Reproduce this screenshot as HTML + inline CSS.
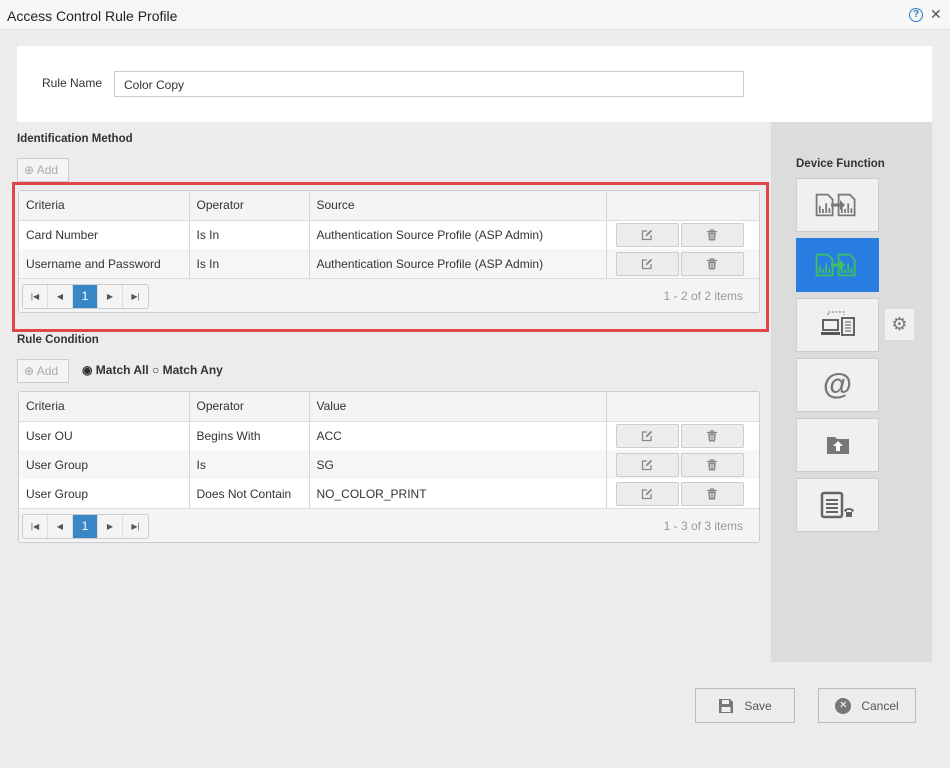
<!DOCTYPE html><html><head><style>
*{box-sizing:border-box;margin:0;padding:0}
body{width:950px;height:768px;background:#ececec;font-family:"Liberation Sans",sans-serif;font-size:12px;color:#333;position:relative;overflow:hidden}
.a{position:absolute}
.tbl{position:absolute;left:18px;width:742px;border:1px solid #ccc;background:#fff;border-radius:3px}
.tbl table{border-collapse:collapse;width:100%}
.tbl td{height:29px;padding:0 7px;border-right:1px solid #d5d5d5;font-size:12px}
.tbl td:last-child{border-right:0}
.tbl tr.h td{background:#f4f4f4;border-bottom:1px solid #ddd}
.tbl tr.g td{background:#f6f6f6}
.ib{display:inline-block;width:63px;height:24px;border:1px solid #ccc;background:#ececec;border-radius:2px;vertical-align:middle;margin-right:2px;text-align:center;padding-top:5px}
.pg{height:34px;background:#f4f4f4;border-top:1px solid #ddd;position:relative}
.pager{position:absolute;left:3px;top:5px;display:flex;border:1px solid #ccc;border-radius:3px;height:25px;background:#f4f4f4}
.pager span{width:25px;text-align:center;line-height:23px;font-size:8px;color:#555;border-right:1px solid #ddd}
.pager span:last-child{border-right:0}
.pager .on{background:#3a87c8;color:#fff;font-size:12px}
.cnt{position:absolute;right:16px;top:10px;color:#999;font-size:12px}
.add{position:absolute;left:17px;width:52px;height:24px;border:1px solid #ccc;background:#f4f4f4;color:#aaa;font-size:12px;line-height:22px;padding-left:6px}
.df{position:absolute;left:796px;width:83px;height:54px;background:#f0f0f0;border:1px solid #ccc;display:flex;align-items:center;justify-content:center}
.btn{position:absolute;top:688px;height:35px;border:1px solid #bbb;background:#ececec;font-size:12px;color:#555;display:flex;align-items:center;justify-content:center;gap:10px}
</style></head><body>
<svg width="0" height="0" style="position:absolute"><defs>
<symbol id="ed" viewBox="0 0 12 12"><path d="M10 6v4.5H1.5V2H6" fill="none" stroke="#888" stroke-width="1.3"/><path d="M4.5 7.5l1-2.5L10 0.8l1.2 1.2L6.8 6.5z" fill="#888"/></symbol>
<symbol id="tr" viewBox="0 0 12 12"><path d="M1 2.5h10M4.5 2.5V1h3v1.5" stroke="#888" stroke-width="1.2" fill="none"/><path d="M2.2 3.5h7.6l-.7 8H2.9z" fill="#888"/><path d="M4.5 5v5M6 5v5M7.5 5v5" stroke="#ececec" stroke-width=".7"/></symbol>
<symbol id="doc" viewBox="0 0 30 30"><path d="M2 2h14l6 6v20H2z" fill="none" stroke="currentColor" stroke-width="2.2"/><path d="M6 25V16M10 25V20M14 25V13M18 25V19" stroke="currentColor" stroke-width="2.2"/></symbol>
</defs></svg>
<div class="a" style="left:0;top:0;width:950px;height:30px;background:#f7f7f7;border-bottom:1px solid #e0e0e0"></div>
<div class="a" style="left:7px;top:8px;font-size:14px;color:#222">Access Control Rule Profile</div>
<div class="a" style="left:909px;top:8px;width:14px;height:14px;border:1.5px solid #2a7ac0;border-radius:50%;color:#2a7ac0;font-size:10px;font-weight:bold;text-align:center;line-height:11px">?</div>
<div class="a" style="left:930px;top:6px;font-size:14px;color:#555">✕</div>
<div class="a" style="left:17px;top:46px;width:915px;height:76px;background:#fff"></div>
<div class="a" style="left:42px;top:76px">Rule Name</div>
<div class="a" style="left:114px;top:71px;width:630px;height:26px;border:1px solid #ccc;background:#fff;padding:6px 9px">Color Copy</div>
<div class="a" style="left:771px;top:122px;width:161px;height:540px;background:#dcdcdc"></div>
<div class="a" style="left:17px;top:133px;font-weight:bold;font-size:11.5px">Identification Method</div>
<div class="add" style="top:158px">⊕ Add</div>
<div class="tbl" style="top:190px">
<table><tr class="h"><td style="width:170px">Criteria</td><td style="width:120px">Operator</td><td style="width:297px">Source</td><td></td></tr>
<tr><td>Card Number</td><td>Is In</td><td>Authentication Source Profile (ASP Admin)</td><td style="padding-left:9px"><span class="ib"><svg width="12" height="12"><use href="#ed"/></svg></span><span class="ib"><svg width="12" height="12"><use href="#tr"/></svg></span></td></tr>
<tr class="g"><td>Username and Password</td><td>Is In</td><td>Authentication Source Profile (ASP Admin)</td><td style="padding-left:9px"><span class="ib"><svg width="12" height="12"><use href="#ed"/></svg></span><span class="ib"><svg width="12" height="12"><use href="#tr"/></svg></span></td></tr></table>
<div class="pg"><div class="pager"><span>|◀</span><span>◀</span><span class="on">1</span><span>▶</span><span>▶|</span></div><div class="cnt">1 - 2 of 2 items</div></div>
</div>
<div class="a" style="left:12px;top:182px;width:757px;height:150px;border:3px solid #e0454a"></div>
<div class="a" style="left:17px;top:334px;font-weight:bold;font-size:11.5px">Rule Condition</div>
<div class="add" style="top:359px">⊕ Add</div>
<div class="a" style="left:82px;top:363px;font-weight:bold">◉ Match All ○ Match Any</div>
<div class="tbl" style="top:391px">
<table><tr class="h"><td style="width:170px">Criteria</td><td style="width:120px">Operator</td><td style="width:297px">Value</td><td></td></tr>
<tr><td>User OU</td><td>Begins With</td><td>ACC</td><td style="padding-left:9px"><span class="ib"><svg width="12" height="12"><use href="#ed"/></svg></span><span class="ib"><svg width="12" height="12"><use href="#tr"/></svg></span></td></tr>
<tr class="g"><td>User Group</td><td>Is</td><td>SG</td><td style="padding-left:9px"><span class="ib"><svg width="12" height="12"><use href="#ed"/></svg></span><span class="ib"><svg width="12" height="12"><use href="#tr"/></svg></span></td></tr>
<tr><td>User Group</td><td>Does Not Contain</td><td>NO_COLOR_PRINT</td><td style="padding-left:9px"><span class="ib"><svg width="12" height="12"><use href="#ed"/></svg></span><span class="ib"><svg width="12" height="12"><use href="#tr"/></svg></span></td></tr></table>
<div class="pg"><div class="pager"><span>|◀</span><span>◀</span><span class="on">1</span><span>▶</span><span>▶|</span></div><div class="cnt">1 - 3 of 3 items</div></div>
</div>
<div class="a" style="left:796px;top:158px;font-weight:bold;font-size:11.5px">Device Function</div>
<div class="df" style="top:178px;color:#777"><svg width="46" height="30" viewBox="0 0 46 30"><g color="#777"><use href="#doc" width="24" height="30"/><use href="#doc" x="22" width="24" height="30"/></g><path d="M16 15h10" stroke="#777" stroke-width="3"/><path d="M25 10l5 5-5 5z" fill="#777"/></svg></div>
<div class="df" style="top:238px;background:#2a7de0;border-color:#2a7de0"><svg width="46" height="30" viewBox="0 0 46 30"><g color="#3cc060"><use href="#doc" width="24" height="30"/><use href="#doc" x="22" width="24" height="30"/></g><path d="M16 15h10" stroke="#3cc060" stroke-width="3"/><path d="M25 10l5 5-5 5z" fill="#3cc060"/></svg></div>
<div class="df" style="top:298px"><svg width="34" height="28" viewBox="0 0 34 28"><path d="M7 4V1h16v3" fill="none" stroke="#777" stroke-dasharray="2 1.5"/><rect x="2" y="9" width="15" height="10" fill="none" stroke="#555" stroke-width="1.8"/><rect x="0" y="21" width="19" height="3" fill="#555"/><rect x="21" y="7" width="12" height="17" fill="none" stroke="#555" stroke-width="1.8"/><path d="M24 11h6M24 14h6M24 17h6M24 20h6" stroke="#555"/></svg></div>
<div class="df" style="top:358px;color:#777;font-size:30px;font-weight:bold">@</div>
<div class="df" style="top:418px"><svg width="24" height="20" viewBox="0 0 24 20"><path d="M1 2h8l2 2h12v15H1z" fill="#777"/><path d="M12 6l-5 5h3v5h4v-5h3z" fill="#fff"/></svg></div>
<div class="df" style="top:478px"><svg width="36" height="28" viewBox="0 0 36 28"><rect x="2" y="2" width="20" height="24" rx="2" fill="none" stroke="#666" stroke-width="2.5"/><path d="M6 9h12M6 13h12M6 17h12M6 21h12" stroke="#666" stroke-width="2"/><path d="M24 19q5-4 10 0l-1 2-2-1v-1h-4v1l-2 1z" fill="#666"/><rect x="26" y="21" width="6" height="5" fill="#666"/></svg></div>
<div class="a" style="left:885px;top:309px;width:29px;height:31px;background:#f0f0f0;color:#777;font-size:18px;text-align:center;line-height:30px">⚙</div>
<div class="btn" style="left:695px;width:100px"><svg width="16" height="16" viewBox="0 0 16 16"><path d="M1 1h11l3 3v11H1z" fill="#777"/><rect x="4" y="2" width="7" height="4" fill="#eee"/><rect x="3.5" y="9" width="9" height="5" fill="#eee"/></svg>Save</div>
<div class="btn" style="left:818px;width:98px"><span style="display:inline-block;width:16px;height:16px;border-radius:50%;background:#777;color:#fff;font-size:10px;text-align:center;line-height:16px">✕</span>Cancel</div>
</body></html>
